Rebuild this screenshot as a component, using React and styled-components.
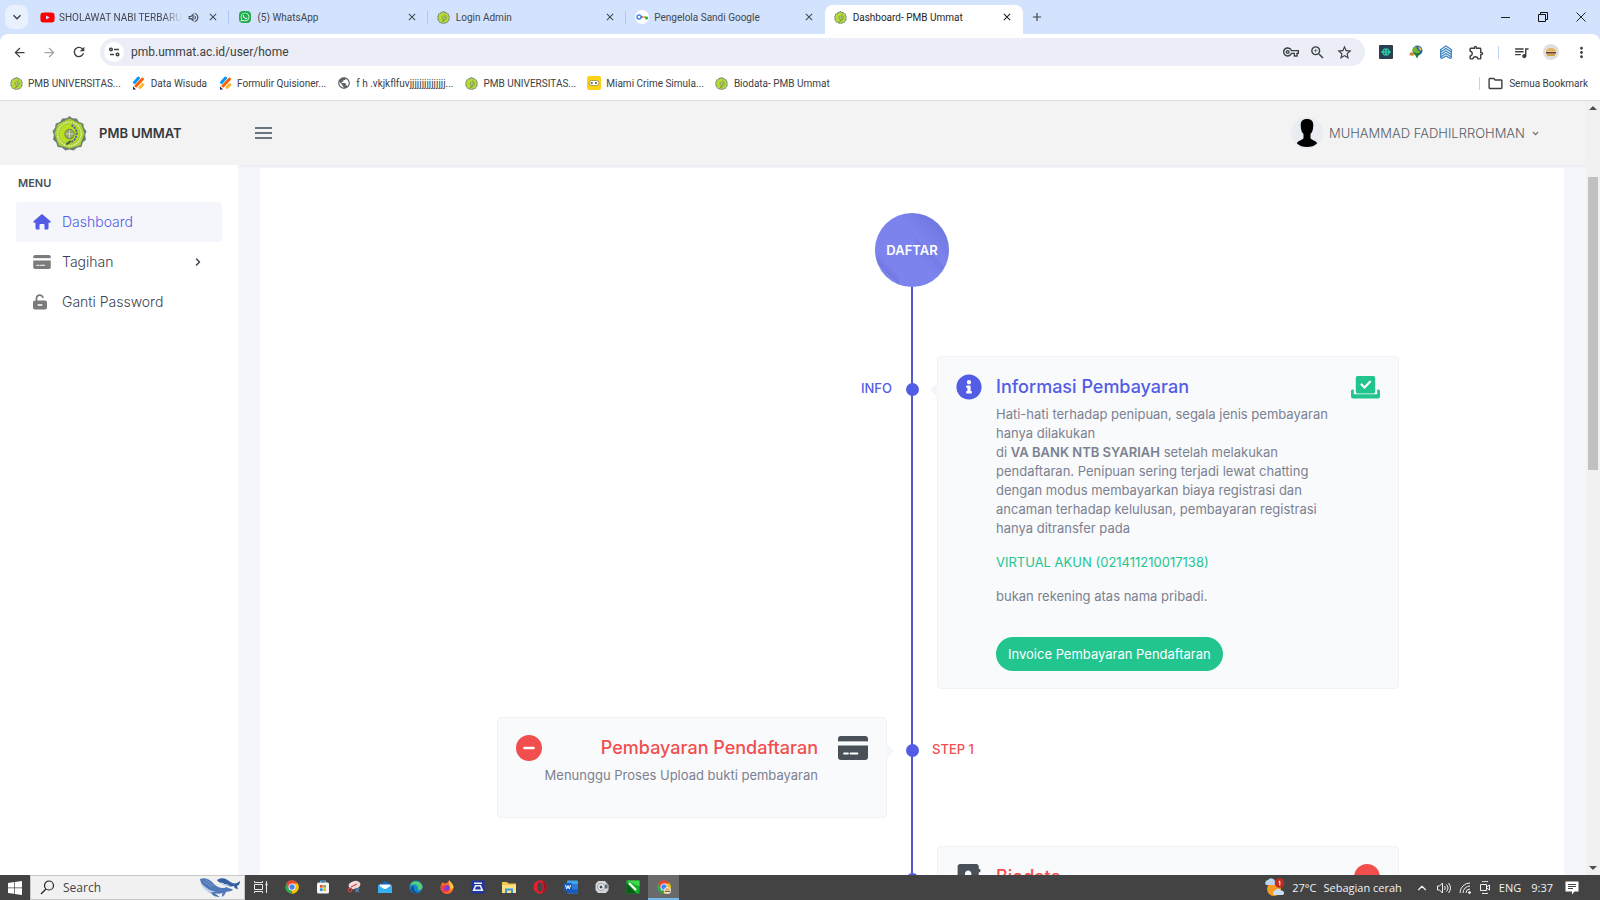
import React from "react";
import styled, { createGlobalStyle } from "styled-components";
import {
  MdArrowBack,
  MdArrowForward,
  MdRefresh,
  MdClose,
  MdAdd,
  MdKeyboardArrowDown,
  MdOutlineVolumeUp,
  MdOutlineVpnKey,
  MdZoomIn,
  MdStarBorder,
  MdOutlineExtension,
  MdQueueMusic,
  MdMoreVert,
  MdOutlineFolder,
  MdPublic,
} from "react-icons/md";
import { FaInfoCircle, FaAddressBook, FaYoutube, FaWhatsapp } from "react-icons/fa";
import { ChevronDown, ChevronRight, ChevronUp } from "lucide-react";

const tabs = [
  { title: "SHOLAWAT NABI TERBARU", icon: "youtube", audio: true },
  { title: "(5) WhatsApp", icon: "whatsapp" },
  { title: "Login Admin", icon: "seal" },
  { title: "Pengelola Sandi Google", icon: "password" },
  { title: "Dashboard- PMB Ummat", icon: "seal", active: true },
];

const bookmarks = [
  { title: "PMB UNIVERSITAS...", icon: "seal" },
  { title: "Data Wisuda", icon: "form" },
  { title: "Formulir Quisioner...", icon: "form" },
  { title: "f h .vkjkflfuvjjjjjjjjjjjjjjj...", icon: "globe" },
  { title: "PMB UNIVERSITAS...", icon: "seal" },
  { title: "Miami Crime Simula...", icon: "game" },
  { title: "Biodata- PMB Ummat", icon: "seal" },
];

// university seal, used as site logo and favicon
const Seal = ({ size }) => (
  <svg width={size} height={size} viewBox="0 0 34 34" aria-hidden="true">
    <path
      d="M17 0l2.500 2.200L24 2.500l2 3.200 4.500 1.800.500 3.800 2.500 3.500-1.300 3.700.800 4.500-3 2.500-1.500 4.500-4 .500L21 33.500l-4-1-4 1L9.500 30.500l-4-.500L4 25.500 1 23l.800-4.500L.500 14.800 3 11.300l.500-3.800L8 5.700l2-3.200 4.500-.300z"
      fill="#6c7f72"
    />
    <path d="M17 2.500l11.500 5.500 3 9-4 11.500-10.500 3-10.500-3-4-11.500 3-9z" fill="#a9cf38" />
    <circle cx="17" cy="17.500" r="11.500" fill="none" stroke="#dff09b" strokeWidth="1.500" strokeDasharray="1.500 1" />
    <circle cx="17" cy="17.500" r="9.500" fill="#b9e01f" />
    <path d="M19 9a9 9 0 0 1-5 17" fill="none" stroke="#53678f" strokeWidth="2" strokeDasharray="2 1" />
    <circle cx="17" cy="17.500" r="4.500" fill="#9aa77b" stroke="#6f8355" />
    <path d="M13 17.500h8M17 13.500v8" stroke="#d9e2a5" strokeWidth="0.800" />
    <path d="M14 28l4-4" stroke="#3c5a2a" strokeWidth="1.500" />
  </svg>
);

const ChromeLogo = ({ badge }) => (
  <svg width="14" height="14" viewBox="0 0 24 24" aria-hidden="true">
    <circle cx="12" cy="12" r="11.500" fill="#34a853" />
    <path d="M12 12L2 6.200A11.500 11.500 0 0 1 22 6.200z" fill="#ea4335" />
    <path d="M12 12V6.200h10A11.500 11.500 0 0 1 12 23.500z" fill="#fbbc04" />
    <path d="M2 6.200L7 15l5-3V6.200z" fill="#ea4335" />
    <circle cx="12" cy="12" r="6" fill="#fff" />
    <circle cx="12" cy="12" r="4.600" fill="#4285f4" />
    {badge && (
      <>
        <circle cx="18" cy="18" r="6" fill="#ece3d6" />
        <path d="M13.500 18.500h9v2h-9z" fill="#8a5a2b" />
        <path d="M14 17.500a4 3.500 0 0 1 8 0z" fill="#e0a857" />
      </>
    )}
  </svg>
);

const CreditCard = ({ width, height }) => (
  <svg width={width} height={height} viewBox="0 0 30 24" fill="currentColor" aria-hidden="true">
    <path d="M3 0h24a3 3 0 0 1 3 3v2H0V3a3 3 0 0 1 3-3z" />
    <path opacity="0.350" d="M0 5h30v1H0z" />
    <path d="M0 9.500h30V21a3 3 0 0 1-3 3H3a3 3 0 0 1-3-3z" />
    <path d="M6 17.500h4M12.500 17.500h7" stroke="#fff" strokeWidth="1.800" strokeLinecap="round" />
  </svg>
);

const MinusCircle = () => (
  <svg width="26" height="26" viewBox="0 0 26 26" aria-hidden="true">
    <circle cx="13" cy="13" r="13" fill="currentColor" />
    <path d="M8.500 13h9" stroke="#fff" strokeWidth="2.600" strokeLinecap="round" />
  </svg>
);

const CheckTray = () => (
  <svg width="29" height="23" viewBox="0 0 29 23" aria-hidden="true">
    <path
      d="M1.500 13.500h1.300v4.800h23.400v-4.800h1.300a1.500 1.500 0 0 1 1.500 1.500v5.500a2 2 0 0 1-2 2H2a2 2 0 0 1-2-2V15a1.500 1.500 0 0 1 1.500-1.500z"
      fill="currentColor"
    />
    <rect x="4.800" width="19.400" height="17.500" rx="1.800" fill="currentColor" />
    <path d="M10.500 8.500l3 3 5.500-5.800" fill="none" stroke="#fff" strokeWidth="2.200" strokeLinecap="round" />
  </svg>
);

const Favicon = ({ name }) => {
  switch (name) {
    case "youtube":
      return (
        <YoutubeMark>
          <FaYoutube size={15} />
        </YoutubeMark>
      );
    case "whatsapp":
      return (
        <WhatsappMark>
          <FaWhatsapp size={10} />
        </WhatsappMark>
      );
    case "password":
      return (
        <svg width="14" height="14" viewBox="0 0 14 14" aria-hidden="true">
          <circle cx="7" cy="7" r="7" fill="#fff" />
          <circle cx="4" cy="7" r="2" fill="none" stroke="#4285f4" strokeWidth="1.500" />
          <path d="M6 7h2" stroke="#ea4335" strokeWidth="1.600" />
          <path d="M8 7h2" stroke="#fbbc04" strokeWidth="1.600" />
          <path d="M9.500 7h3v2h-2" fill="#34a853" stroke="#34a853" strokeWidth="1" />
        </svg>
      );
    case "form":
      return (
        <svg width="13" height="14" viewBox="0 0 13 14" aria-hidden="true">
          <g strokeLinecap="round" strokeWidth="3">
            <path d="M2.500 6.500l4-4.500" stroke="#0099ff" />
            <path d="M4 10l6.500-7" stroke="#ff6100" />
            <path d="M8 11.500l2.800-3" stroke="#ffb629" />
          </g>
          <path d="M1 10.500v3h3z" fill="#0a1551" />
        </svg>
      );
    case "globe":
      return <MdPublic size={14} color="#5f6368" />;
    case "game":
      return (
        <svg width="14" height="14" viewBox="0 0 14 14" aria-hidden="true">
          <rect width="14" height="14" rx="2" fill="#fcd116" />
          <rect x="2" y="4.500" width="10" height="5" rx="2.500" fill="#fff" stroke="#8d7d2a" strokeWidth="0.700" />
          <path d="M3.500 7h2.500M4.750 5.800v2.400" stroke="#555" strokeWidth="0.900" />
          <circle cx="9" cy="7" r="1" fill="#555" />
        </svg>
      );
    default:
      return <Seal size={13} />;
  }
};

// top part of the browser: tabs, address bar and bookmarks
const BrowserChrome = () => (
  <ChromeFrame>
    <TabStrip>
      <TabSearch type="button" aria-label="Cari tab">
        <MdKeyboardArrowDown size={16} />
      </TabSearch>
      <TabList>
        {tabs.map((tab) => (
          <Tab key={tab.title} $active={tab.active}>
            <TabButton type="button">
              <IconSlot>
                <Favicon name={tab.icon} />
              </IconSlot>
              <TabTitle $fade={tab.audio}>{tab.title}</TabTitle>
              {tab.audio && <MdOutlineVolumeUp size={13} />}
            </TabButton>
            <TabClose type="button" aria-label="Tutup">
              <MdClose size={12} />
            </TabClose>
          </Tab>
        ))}
      </TabList>
      <NewTab type="button" aria-label="Tab baru">
        <MdAdd size={14} />
      </NewTab>
      <WindowControls>
        <WindowButton type="button" aria-label="Minimize">
          <svg width="10" height="10" viewBox="0 0 10 10">
            <path d="M1 5.500h9" stroke="#222" />
          </svg>
        </WindowButton>
        <WindowButton type="button" aria-label="Restore">
          <svg width="10" height="10" viewBox="0 0 10 10">
            <path d="M.500 2.500h7v7h-7zM2.500 2.500v-2h7v7h-2" fill="none" stroke="#111" />
          </svg>
        </WindowButton>
        <WindowButton type="button" aria-label="Close">
          <svg width="10" height="10" viewBox="0 0 10 10">
            <path d="M.500.500l9 9M9.500.500l-9 9" stroke="#222" />
          </svg>
        </WindowButton>
      </WindowControls>
    </TabStrip>

    <Toolbar>
      <ToolButton type="button" aria-label="Kembali">
        <MdArrowBack size={15} />
      </ToolButton>
      <ToolButton type="button" aria-label="Maju" disabled>
        <MdArrowForward size={15} />
      </ToolButton>
      <ToolButton type="button" aria-label="Muat ulang">
        <MdRefresh size={16} />
      </ToolButton>
      <Omnibox>
        <SiteInfo type="button" aria-label="Info situs">
          <svg width="11" height="10" viewBox="0 0 11 10" fill="none" stroke="#3c4043" strokeWidth="1.500">
            <circle cx="2" cy="2.500" r="1.300" />
            <path d="M5 2.500h5M1 7.500h4" />
            <circle cx="8.500" cy="7.500" r="1.300" />
          </svg>
        </SiteInfo>
        <AddressInput aria-label="Alamat" defaultValue="pmb.ummat.ac.id/user/home" />
        <OmniButton type="button" aria-label="Sandi">
          <MdOutlineVpnKey size={16} />
        </OmniButton>
        <OmniButton type="button" aria-label="Zoom">
          <MdZoomIn size={17} />
        </OmniButton>
        <OmniButton type="button" aria-label="Bookmark">
          <MdStarBorder size={17} />
        </OmniButton>
      </Omnibox>
      <Extensions>
        <ToolButton type="button" aria-label="Ekstensi 1">
          <svg width="14" height="14" viewBox="0 0 14 14">
            <rect width="14" height="14" rx="1" fill="#2a3f4f" />
            <path d="M5 3.500h4l3 3.500-3 3.500H5L2 7z" fill="#2ed3b0" />
            <path d="M3 5.700h8M3 8.300h8M5.500 4v6M8.500 4v6" stroke="#2a3f4f" strokeWidth="0.400" />
          </svg>
        </ToolButton>
        <ToolButton type="button" aria-label="Ekstensi 2">
          <svg width="14" height="14" viewBox="0 0 14 14">
            <circle cx="8.500" cy="5.500" r="5" fill="#2b63b8" />
            <path d="M4 3l3-2 1 3 3 3-2 2-6-3z" fill="#74b72b" />
            <path d="M9 1l4 3-2 2z" fill="#f0c330" />
            <ellipse cx="3" cy="9" rx="2.700" ry="1.800" fill="#d8842b" />
            <path d="M5 8h6l-3 5.500z" fill="#1d7d2c" />
          </svg>
        </ToolButton>
        <ToolButton type="button" aria-label="Ekstensi 3">
          <svg width="12" height="14" viewBox="0 0 12 14" fill="none" stroke="#3f86c4" strokeWidth="1.300">
            <path d="M.700 4.500L6 1l5.300 3.500M.700 7L6 3.500 11.300 7M.700 9.500L6 6l5.300 3.500M.700 12L6 8.500l5.300 3.500M.700 14L6 11l5.300 3M.700 4v9M11.300 4v9" />
          </svg>
        </ToolButton>
        <ToolButton type="button" aria-label="Ekstensi">
          <MdOutlineExtension size={17} />
        </ToolButton>
        <Divider />
        <ToolButton type="button" aria-label="Media">
          <MdQueueMusic size={17} />
        </ToolButton>
        <ToolButton type="button" aria-label="Profil">
          <svg width="16" height="16" viewBox="0 0 16 16">
            <circle cx="8" cy="8" r="8" fill="#e2dfdb" />
            <path d="M3 7.500a5 3.500 0 0 1 10 0z" fill="#e5b45f" />
            <path d="M3 8h10v1.500H3z" fill="#5f3a1c" />
            <path d="M3.500 10h9l-1 2h-7z" fill="#d69b48" />
          </svg>
        </ToolButton>
        <ToolButton type="button" aria-label="Menu">
          <MdMoreVert size={17} />
        </ToolButton>
      </Extensions>
    </Toolbar>

    <BookmarkBar>
      {bookmarks.map((item, i) => (
        <Bookmark href="#" key={i}>
          <IconSlot>
            <Favicon name={item.icon} />
          </IconSlot>
          {item.title}
        </Bookmark>
      ))}
      <AllBookmarks>
        <Divider />
        <Bookmark href="#">
          <MdOutlineFolder size={17} />
          Semua Bookmark
        </Bookmark>
      </AllBookmarks>
    </BookmarkBar>
  </ChromeFrame>
);

// site header with logo and the signed in user
const Header = () => (
  <HeaderBar>
    <Brand href="#">
      <Seal size={35} />
      PMB UMMAT
    </Brand>
    <Hamburger type="button" aria-label="Menu">
      <svg width="17" height="12" viewBox="0 0 17 12">
        <path d="M0 1h17M0 6h17M0 11h17" stroke="#6b757d" strokeWidth="1.800" />
      </svg>
    </Hamburger>
    <UserButton type="button">
      <svg width="32" height="32" viewBox="0 0 32 32" aria-hidden="true">
        <circle cx="16" cy="16" r="16" fill="#e9edf2" />
        <path
          d="M16 2c4.500 0 6.500 2.500 6.300 6.500-.1 4.500-1.300 7-2.800 8.500v4c0 2 6.500 2.500 6.500 5.500-2.500 2.500-6 3.500-10 3.500S8.500 29 6 26.500c0-3 6.500-3.500 6.500-5.500v-4C11 15.500 9.800 13 9.700 8.500 9.500 4.500 11.500 2 16 2z"
          fill="#000"
        />
      </svg>
      <span>MUHAMMAD FADHILRROHMAN</span>
      <ChevronDown size={9} strokeWidth={3} />
    </UserButton>
  </HeaderBar>
);

const Sidebar = () => (
  <SideNav>
    <MenuLabel>MENU</MenuLabel>
    <NavLink href="#" $active>
      <NavIcon>
        <svg width="18" height="16" viewBox="0 0 18 16" fill="currentColor" aria-hidden="true">
          <path d="M8.300.500a1 1 0 0 1 1.400 0l7.500 6.500c.9.800.4 1.700-.5 1.700H15.500V14a1.500 1.500 0 0 1-1.500 1.500h-2.500V11a1 1 0 0 0-1-1h-3a1 1 0 0 0-1 1v4.500H4A1.500 1.500 0 0 1 2.500 14V8.700H1.300C.4 8.700-.1 7.800.8 7z" />
        </svg>
      </NavIcon>
      Dashboard
    </NavLink>
    <NavLink href="#">
      <NavIcon>
        <CreditCard width={18} height={14} />
      </NavIcon>
      Tagihan
      <ChevronRight size={12} strokeWidth={3} />
    </NavLink>
    <NavLink href="#">
      <NavIcon>
        <svg width="14" height="16" viewBox="0 0 14 16" aria-hidden="true">
          <path d="M3.500 8V4.500a3.300 3.300 0 0 1 6.400-1.200" fill="none" stroke="currentColor" strokeWidth="1.700" strokeLinecap="round" />
          <rect y="6.500" width="14" height="9" rx="2" fill="currentColor" />
          <path d="M5.200 11h3.600" stroke="#fff" strokeWidth="1.600" strokeLinecap="round" />
        </svg>
      </NavIcon>
      Ganti Password
    </NavLink>
  </SideNav>
);

const Timeline = () => (
  <TimelineCard>
    <StartCircle>DAFTAR</StartCircle>
    <Lead />

    <Step>
      <StepLabel $align="right" $tone="primary">INFO</StepLabel>
      <Axis>
        <Dot />
      </Axis>
      <StepCard $side="right">
        <StepIcon $tone="primary">
          <FaInfoCircle size={26} />
        </StepIcon>
        <StepBody>
          <StepTitle $tone="primary">Informasi Pembayaran</StepTitle>
          <Text>
            Hati-hati terhadap penipuan, segala jenis pembayaran hanya dilakukan
            <br />
            di <b>VA BANK NTB SYARIAH</b> setelah melakukan pendaftaran.
            Penipuan sering terjadi lewat chatting dengan modus membayarkan
            biaya registrasi dan ancaman terhadap kelulusan, pembayaran
            registrasi hanya ditransfer pada
          </Text>
          <Text $tone="success">VIRTUAL AKUN (021411210017138)</Text>
          <Text>bukan rekening atas nama pribadi.</Text>
          <InvoiceButton type="button">Invoice Pembayaran Pendaftaran</InvoiceButton>
        </StepBody>
        <StepIcon $tone="success">
          <CheckTray />
        </StepIcon>
      </StepCard>
    </Step>

    <Step>
      <StepCard $side="left">
        <StepIcon $tone="danger">
          <MinusCircle />
        </StepIcon>
        <StepBody $align="right">
          <StepTitle $tone="danger">Pembayaran Pendaftaran</StepTitle>
          <Text>Menunggu Proses Upload bukti pembayaran</Text>
        </StepBody>
        <StepIcon $tone="dark">
          <CreditCard width={30} height={24} />
        </StepIcon>
      </StepCard>
      <Axis>
        <Dot />
      </Axis>
      <StepLabel $tone="danger">STEP 1</StepLabel>
    </Step>

    <Step>
      <StepLabel $align="right" />
      <Axis>
        <Dot />
      </Axis>
      <StepCard $side="right">
        <StepIcon $tone="dark">
          <FaAddressBook size={26} />
        </StepIcon>
        <StepBody>
          <StepTitle $tone="danger">Biodata</StepTitle>
        </StepBody>
        <StepIcon $tone="danger">
          <MinusCircle />
        </StepIcon>
      </StepCard>
    </Step>
  </TimelineCard>
);

const taskIcons = [
  {
    name: "Task View",
    art: (
      <g fill="none" stroke="#e8e8e8">
        <path d="M.500 1v1.500h8V1M.500 13v-1.500h8V13M.500 4.500h8v5h-8zM12.500 1v12" />
        <path d="M11.500 4.500h2" strokeWidth="2" />
      </g>
    ),
  },
  { name: "Chrome", logo: <ChromeLogo /> },
  {
    name: "Store",
    art: (
      <>
        <path d="M4.500 3V1h5v2" fill="none" stroke="#57b5e8" />
        <rect x="1" y="2.500" width="12" height="11" rx="1.500" fill="#f4f4f4" />
        <path d="M4 5h2.700v2.700H4z" fill="#e8502a" />
        <path d="M7.300 5H10v2.700H7.300z" fill="#76b82a" />
        <path d="M4 8.300h2.700V11H4z" fill="#1e9de3" />
        <path d="M7.300 8.300H10V11H7.300z" fill="#f6b70f" />
      </>
    ),
  },
  {
    name: "Snip",
    art: (
      <>
        <ellipse cx="7.500" cy="5" rx="6" ry="4" fill="#f1dcdc" transform="rotate(-15 7.500 5)" />
        <path d="M4 7L10 4" stroke="#d44848" strokeWidth="1.200" />
        <circle cx="3" cy="10" r="1.800" fill="none" stroke="#c94545" strokeWidth="1.300" />
        <path d="M8 8l4 4M12 8l-3.500 4" stroke="#5381a8" strokeWidth="1.500" />
      </>
    ),
  },
  {
    name: "Mail",
    art: (
      <>
        <path d="M0 5l7-4 7 4v8H0z" fill="#1466b8" />
        <path d="M1.500 4.500h11V9h-11z" fill="#fff" />
        <path d="M0 5l7 4.500L14 5v8H0z" fill="#35b1f1" />
      </>
    ),
  },
  {
    name: "Edge",
    art: (
      <>
        <circle cx="7" cy="7" r="6.500" fill="#1b86d0" />
        <path d="M1 5.500A6.500 6.500 0 0 1 13.500 7c0 2-1.500 3-3.500 3-1 0-1.500-.7-1-1.500C9.500 6 6 3 1 5.500z" fill="#51cf7a" />
        <path d="M5 7c-1 3 1.500 5.500 5 5-5 3-8.500-1-8-4 .3-1.500 2-2.500 3-1z" fill="#0d5297" />
      </>
    ),
  },
  {
    name: "Firefox",
    art: (
      <>
        <path d="M9 0c1 2 4.500 3.500 4.500 7.500A6.500 6.500 0 0 1 .500 7.500C.500 5 2 4 2.300 2l2 1.500C6 3 8.500 3 9 0z" fill="#ff6a26" />
        <path d="M9 0c1 2 4.500 3.500 4.500 7.500l-3 3C11 6 8 5 9 0z" fill="#ffc93c" />
        <circle cx="6.800" cy="8" r="3" fill="#7d3fd1" />
        <path d="M1 6c2-1 4-.5 5 .5L3.500 9C5 11 8 11 10 9c-1 3-5 4.500-8 2z" fill="#f5364c" />
      </>
    ),
  },
  {
    name: "Scanner",
    art: (
      <>
        <rect x="0.500" y="0.500" width="13" height="13" fill="#2036a0" />
        <path d="M3 2.500h8v1.500H3zM4 5h6L12.500 11h-11z" fill="#f2f4fb" />
        <path d="M5 6.500h4l1 3H4z" fill="#2036a0" />
      </>
    ),
  },
  {
    name: "Explorer",
    art: (
      <>
        <path d="M0 2h5l1.500 1.500H14V13H0z" fill="#f4c64e" />
        <path d="M0 5h14v8H0z" fill="#ffdf84" />
        <path d="M3 8.500h8V13H9v-2.500H5V13H3z" fill="#3a9ad9" />
      </>
    ),
  },
  {
    name: "Opera",
    art: (
      <>
        <circle cx="7" cy="7" r="6.700" fill="#e3202c" />
        <ellipse cx="7" cy="7" rx="2.700" ry="4.700" fill="#464545" />
        <path d="M9 .700a6.700 6.700 0 0 1 0 12.600c2-2 2.500-9 0-12.600z" fill="#a70f1c" />
      </>
    ),
  },
  {
    name: "Word",
    art: (
      <>
        <rect x="3" y="0.500" width="11" height="13" rx="1" fill="#41a5ee" />
        <path d="M3 4h11v6H3z" fill="#2b7cd3" />
        <path d="M3 9.500h11v4H3z" fill="#185abd" />
        <rect x="0" y="3" width="8" height="8" rx="1" fill="#185abd" />
        <path d="M1.500 5l1.200 4L4 5.500 5.300 9l1.200-4" fill="none" stroke="#fff" strokeWidth="1" />
      </>
    ),
  },
  {
    name: "Camera",
    art: (
      <>
        <path d="M3 1h7l3.500 4v5L11 13H3L.500 10V4z" fill="#d3d6d8" />
        <circle cx="6" cy="7" r="3.500" fill="#f4f5f6" stroke="#868d93" strokeWidth="0.800" />
        <circle cx="6" cy="7" r="1.500" fill="#3f4a55" />
        <path d="M10 4.500h2.500v4H10z" fill="#5d6b78" />
      </>
    ),
  },
  {
    name: "Corel",
    art: (
      <>
        <rect x="0.500" y="0.500" width="13" height="13" fill="#12b32b" />
        <path d="M.500.500h13v6z" fill="#3ddb4d" />
        <path d="M.500 3l10 10.500H.500z" fill="#0a5c18" />
        <path d="M3 3l7 7" stroke="#fff" strokeWidth="2.200" />
      </>
    ),
  },
  { name: "Chrome profile", logo: <ChromeLogo badge />, active: true },
];

const Whales = () => (
  <svg width="40" height="20" viewBox="0 0 40 20" aria-hidden="true">
    <path d="M0 1c5-2 10 0 14 5 4 4 9 5 13 3 1 2 5 1 6 3-3 2-5 1-7 2-1 2-2 4-4 5 0-2 0-3 1-4-3 1-6 1-8 0 1 1 3 3 5 4-4 0-7-1-9-4C5 13 1 7 0 1z" fill="#4f78b8" />
    <path d="M1 5c4 4 8 8 15 8.500l-5 1C5 13 2 10 1 5z" fill="#c6d6ec" />
    <path d="M3 3l9 6M6 2l8 6" stroke="#86a7d6" strokeWidth="0.700" />
    <path d="M17 2c4-3 9-2 12 1 3 2 5 3 8 2l3-2c0 3-1 4-3 5l1 3c-3 0-4-2-4-3-4 1-8 0-11-3-3 0-5-1-6-3z" fill="#35609f" />
    <path d="M18 4c3 2 6 2 9 2l3 2c-4 0-9-1-12-4z" fill="#b7cbe6" />
  </svg>
);

const Taskbar = () => (
  <TaskRow>
    <StartButton type="button" aria-label="Start">
      <svg width="14" height="14" viewBox="0 0 14 14" fill="#fff">
        <path d="M0 2l6-.9v5.500H0zM6.700 1L14 0v6.600H6.700zM0 7.300h6v5.500L0 12zM6.700 7.300H14V14l-7.300-1z" />
      </svg>
    </StartButton>
    <SearchBox>
      <svg width="15" height="15" viewBox="0 0 15 15" fill="none" stroke="#222" strokeWidth="1.200" aria-hidden="true">
        <circle cx="9" cy="5.500" r="4.500" />
        <path d="M6 9l-5 5" />
      </svg>
      <SearchInput placeholder="Search" aria-label="Search" />
      <Whales />
    </SearchBox>
    {taskIcons.map((item) => (
      <TaskButton type="button" key={item.name} aria-label={item.name} $active={item.active}>
        {item.logo || (
          <svg width="14" height="14" viewBox="0 0 14 14">
            {item.art}
          </svg>
        )}
      </TaskButton>
    ))}
    <Tray>
      <Weather type="button">
        <svg width="20" height="19" viewBox="0 0 20 19" aria-hidden="true">
          <circle cx="9" cy="11" r="7" fill="#f59b23" />
          <path d="M1 7a3 3 0 0 1 2-5 4 4 0 0 1 7 1v4z" fill="#bcd3f2" />
          <path d="M9 17a2.500 2.500 0 0 1 1-4.500 3.500 3.500 0 0 1 6 0A2.500 2.500 0 0 1 18 17z" fill="#c9dcf6" />
          <circle cx="14.500" cy="5" r="4.800" fill="#c42b1c" />
          <path d="M13.500 4l1.300-1v4.500" fill="none" stroke="#fff" />
        </svg>
        <span>27°C</span>
        <span>Sebagian cerah</span>
      </Weather>
      <ChevronUp size={14} />
      <svg width="14" height="12" viewBox="0 0 14 12" fill="none" stroke="currentColor" aria-hidden="true">
        <path d="M.500 4h2l3-3v10l-3-3h-2zM7.500 4a3 3 0 0 1 0 4M9.500 2.500a5 5 0 0 1 0 7M11.500 1a8 8 0 0 1 0 10" />
      </svg>
      <svg width="12" height="12" viewBox="0 0 12 12" fill="none" stroke="currentColor" aria-hidden="true">
        <path d="M1 11A10 10 0 0 1 11 1M4 11a7 7 0 0 1 7-7M7 11a4 4 0 0 1 4-4" />
        <circle cx="10.500" cy="10.500" r="1" fill="currentColor" />
      </svg>
      <svg width="12" height="13" viewBox="0 0 12 13" fill="none" stroke="currentColor" aria-hidden="true">
        <path d="M3 .700c2-.5 4-.5 6 0M3 12.300c2 .5 4 .5 6 0M1.500 3.500h6v6h-6zM7.500 6l3-2v5l-3-2" />
      </svg>
      <span>ENG</span>
      <Clock>9:37</Clock>
      <svg width="14" height="14" viewBox="0 0 14 14" aria-hidden="true">
        <path d="M.500.500h13v10h-4L7 13.500V10.500H.500z" fill="#fff" />
        <path d="M3 3.500h8M3 5.500h8M3 7.500h5" stroke="#444" />
      </svg>
    </Tray>
  </TaskRow>
);

const App = () => (
  <Screen>
    <GlobalStyle />
    <BrowserChrome />
    <Viewport>
      <Page>
        <Header />
        <Body>
          <Sidebar />
          <Main>
            <Timeline />
          </Main>
        </Body>
      </Page>
      <ScrollTrack>
        <ScrollArrow $dir="up" />
        <ScrollThumb />
        <ScrollArrow $dir="down" />
      </ScrollTrack>
    </Viewport>
    <Taskbar />
  </Screen>
);

const tones = {
  primary: "#525ce5",
  danger: "#f14e4e",
  success: "#23c58f",
  dark: "#495057",
};

const GlobalStyle = createGlobalStyle`
  * {
    box-sizing: border-box;
  }

  body {
    margin: 0;
    font-family: Inter, "Liberation Sans", sans-serif;
    font-size: 13px;
  }

  button, input {
    font: inherit;
    color: inherit;
    border: 0;
    padding: 0;
    margin: 0;
    background: none;
  }

  a {
    color: inherit;
    text-decoration: none;
  }

  svg {
    flex-shrink: 0;
  }
`;

const Screen = styled.div`
  height: 100vh;
  display: flex;
  flex-direction: column;
  overflow: hidden;
`;

/* browser */
const ChromeFrame = styled.header`
  flex-shrink: 0;
  background: #d3e2fd;
  color: #3c4043;
  font-family: Roboto, "Open Sans", sans-serif;
  font-size: 10px;
`;

const TabStrip = styled.div`
  height: 34px;
  display: flex;
  align-items: center;
`;

const TabSearch = styled.button`
  width: 23px;
  height: 24px;
  margin: 0 3px 0 5px;
  display: grid;
  place-items: center;
  border-radius: 8px;
  background: #e9f0fe;
`;

const TabList = styled.div`
  flex: 0 1 992px;
  align-self: stretch;
  padding-top: 5px;
  display: flex;
`;

const Tab = styled.div`
  flex: 1 1 0;
  min-width: 0;
  display: flex;
  align-items: center;
  padding: 0 9px 5px 9px;
  border-radius: 8px 8px 0 0;
  color: ${(p) => (p.$active ? "#1f1f1f" : "#43474e")};
  background: ${(p) =>
    p.$active
      ? "#fff"
      : "linear-gradient(#a8c7fa, #a8c7fa) right 5px / 1px 14px no-repeat"};

  &:nth-last-child(2) {
    background: none;
  }
`;

const TabButton = styled.button`
  flex: 1;
  min-width: 0;
  height: 24px;
  display: flex;
  align-items: center;
  gap: 5px;
  text-align: left;
`;

const TabClose = styled.button`
  width: 14px;
  height: 14px;
  margin-left: 6px;
  display: grid;
  place-items: center;
`;

const TabTitle = styled.span`
  flex: 1;
  overflow: hidden;
  white-space: nowrap;
  mask-image: ${(p) => (p.$fade ? "linear-gradient(90deg, #000 85%, transparent)" : "none")};
`;

const IconSlot = styled.span`
  width: 14px;
  height: 14px;
  flex-shrink: 0;
  display: grid;
  place-items: center;
`;

const YoutubeMark = styled.span`
  display: grid;
  color: #f00;
`;

const WhatsappMark = styled.span`
  width: 12px;
  height: 12px;
  display: grid;
  place-items: center;
  border-radius: 4px;
  background: #1fad4b;
  color: #fff;
`;

const NewTab = styled.button`
  width: 28px;
  height: 24px;
  display: grid;
  place-items: center;
`;

const WindowControls = styled.div`
  margin-left: auto;
  display: flex;
`;

const WindowButton = styled.button`
  width: 38px;
  height: 34px;
  display: grid;
  place-items: center;
`;

const Toolbar = styled.div`
  height: 36px;
  display: flex;
  align-items: center;
  padding: 0 4px;
  background: #fff;
  border-radius: 8px 8px 0 0;
`;

const ToolButton = styled.button`
  width: 30px;
  height: 28px;
  display: grid;
  place-items: center;

  &:disabled {
    color: #9fa3a8;
  }
`;

const Omnibox = styled.div`
  flex: 1;
  height: 28px;
  margin: 0 6px;
  padding: 0 7px 0 4px;
  display: flex;
  align-items: center;
  border-radius: 14px;
  background: #ebeef7;
`;

const SiteInfo = styled.button`
  width: 20px;
  height: 20px;
  display: grid;
  place-items: center;
  border-radius: 50%;
  background: #fff;
`;

const AddressInput = styled.input`
  flex: 1;
  min-width: 0;
  padding-left: 7px;
  font-size: 12px;
  outline: 0;
`;

const OmniButton = styled.button`
  width: 27px;
  height: 24px;
  display: grid;
  place-items: center;
`;

const Extensions = styled.div`
  display: flex;
  align-items: center;
`;

const Divider = styled.span`
  width: 1px;
  height: 13px;
  margin: 0 7px;
  background: #c0d3f7;
`;

const BookmarkBar = styled.nav`
  height: 31px;
  display: flex;
  align-items: center;
  gap: 11px;
  padding: 0 12px 4px 9px;
  background: #fff;
  border-bottom: 1px solid #dadce0;
`;

const Bookmark = styled.a`
  display: flex;
  align-items: center;
  gap: 5px;
  white-space: nowrap;
`;

const AllBookmarks = styled.div`
  margin-left: auto;
  display: flex;
  align-items: center;
`;

/* page */
const Viewport = styled.div`
  flex: 1;
  min-height: 0;
  display: flex;
`;

const Page = styled.div`
  flex: 1;
  min-width: 0;
  display: flex;
  flex-direction: column;
  overflow: hidden;
`;

const HeaderBar = styled.header`
  height: 64px;
  flex-shrink: 0;
  display: flex;
  align-items: center;
  padding: 0 46px 0 52px;
  background: #f3f3f3;
`;

const Brand = styled.a`
  width: 203px;
  display: flex;
  align-items: center;
  gap: 12px;
  color: #343a40;
  font-weight: 600;
`;

const Hamburger = styled.button`
  display: grid;
`;

const UserButton = styled.button`
  margin-left: auto;
  display: flex;
  align-items: center;
  gap: 6px;
  color: #565f66;
  font-weight: 300;
`;

const Body = styled.div`
  flex: 1;
  min-height: 0;
  display: flex;
`;

const SideNav = styled.nav`
  width: 238px;
  flex-shrink: 0;
  padding: 8px 16px;
  background: #fff;
`;

const MenuLabel = styled.h2`
  margin: 0 0 9px 2px;
  color: #495057;
  font-size: 11px;
  line-height: 20px;
  font-weight: 600;
`;

const NavLink = styled.a`
  height: 40px;
  display: flex;
  align-items: center;
  padding: 0 18px 1px 17px;
  border-radius: 3px;
  font-size: 14px;
  font-weight: 300;
  color: ${(p) => (p.$active ? tones.primary : "#3c4252")};
  background: ${(p) => (p.$active ? "#f4f6fb" : "none")};

  > span {
    color: ${(p) => (p.$active ? tones.primary : "#7b7b7b")};
  }

  > svg {
    margin-left: auto;
  }
`;

const NavIcon = styled.span`
  width: 29px;
  display: flex;
`;

const Main = styled.main`
  flex: 1;
  min-width: 0;
  padding: 3px 22px 0;
  display: flex;
  background: linear-gradient(#ebeef5, #f4f6fb 4px);
`;

const TimelineCard = styled.section`
  flex: 1;
  min-width: 0;
  padding-top: 45px;
  overflow: hidden;
  background: #fff;
`;

const StartCircle = styled.div`
  width: 74px;
  height: 74px;
  margin: 0 auto;
  display: grid;
  place-items: center;
  border-radius: 50%;
  color: #fff;
  font-weight: 600;
  background:
    linear-gradient(45deg, transparent 50%, rgba(60, 65, 170, 0.2) 50%, transparent 64%) -10px 38px / 34px 34px no-repeat,
    linear-gradient(225deg, transparent 50%, rgba(60, 65, 170, 0.12) 50%, transparent 72%) 40px 24px / 36px 36px no-repeat,
    linear-gradient(225deg, rgba(60, 65, 170, 0.3), transparent 36%),
    #7c83ec;
`;

const line = "linear-gradient(#5358cc, #5358cc) center / 2px 100% no-repeat";

const Lead = styled.div`
  height: 69px;
  background: ${line};
`;

const Step = styled.article`
  display: grid;
  grid-template-columns: 1fr 40px 1fr;
`;

const Axis = styled.div`
  padding-top: 27px;
  background: ${line};
`;

const Dot = styled.div`
  width: 13px;
  height: 13px;
  margin: 0 auto;
  border-radius: 50%;
  background: ${tones.primary};
`;

const StepLabel = styled.div`
  padding-top: 22px;
  line-height: 20px;
  font-weight: 500;
  text-align: ${(p) => p.$align || "left"};
  color: ${(p) => tones[p.$tone]};
`;

const StepCard = styled.div`
  position: relative;
  width: ${(p) => (p.$side === "right" ? "462px" : "390px")};
  max-width: 100%;
  min-height: 101px;
  margin: ${(p) => (p.$side === "right" ? "0 0 28px 5px" : "0 5px 28px auto")};
  padding: 17px 18px;
  display: flex;
  align-items: flex-start;
  gap: ${(p) => (p.$side === "right" ? "14px" : "0")};
  border: 1px solid #eff2f7;
  border-radius: 4px;
  background: #f9fafc;

  /* pointer towards the line */
  &::before {
    content: "";
    position: absolute;
    top: 25px;
    ${(p) => (p.$side === "right" ? "right" : "left")}: 100%;
    border: 8px solid transparent;
    ${(p) => (p.$side === "right" ? "border-right-color" : "border-left-color")}: #f5f6fa;
  }
`;

const StepIcon = styled.span`
  min-height: 26px;
  display: flex;
  align-items: center;
  color: ${(p) => tones[p.$tone]};
`;

const StepBody = styled.div`
  flex: 1;
  min-width: 0;
  text-align: ${(p) => p.$align || "left"};
  padding-right: ${(p) => (p.$align === "right" ? "20px" : "0")};
`;

const StepTitle = styled.h3`
  margin: 0 0 5px;
  font-size: 18px;
  line-height: 26px;
  font-weight: 500;
  color: ${(p) => tones[p.$tone]};
`;

const Text = styled.p`
  margin: 0 0 15px;
  line-height: 19px;
  color: ${(p) => tones[p.$tone] || "#7b8190"};

  b {
    font-weight: 600;
  }
`;

const InvoiceButton = styled.button`
  height: 34px;
  margin: 16px 0 0;
  padding: 0 12px;
  border-radius: 17px;
  color: #fff;
  background: ${tones.success};
`;

const ScrollTrack = styled.div`
  width: 14px;
  display: flex;
  flex-direction: column;
  align-items: center;
  padding: 1px 0;
  background: #f1f1f1;
`;

const ScrollArrow = styled.span`
  border: 4px solid transparent;
  border-${(p) => (p.$dir === "up" ? "bottom" : "top")}-color: #505050;
  margin-top: ${(p) => (p.$dir === "up" ? "0" : "auto")};
`;

const ScrollThumb = styled.div`
  width: 10px;
  height: 38%;
  margin-top: 67px;
  background: #c1c1c1;
`;

/* windows taskbar */
const TaskRow = styled.footer`
  height: 25px;
  flex-shrink: 0;
  display: flex;
  align-items: center;
  background: #444343;
  color: #f2f2f2;
  font-family: "Open Sans", Roboto, sans-serif;
  font-size: 11px;
`;

const StartButton = styled.button`
  width: 30px;
  height: 25px;
  display: grid;
  place-items: center;
`;

const SearchBox = styled.label`
  width: 215px;
  height: 25px;
  padding: 0 4px 0 9px;
  display: flex;
  align-items: center;
  gap: 8px;
  border: 1px solid #c9c9c9;
  background: #f1f1f1;
`;

const SearchInput = styled.input`
  flex: 1;
  min-width: 0;
  color: #444;
  font-size: 12px;
  outline: 0;

  &::placeholder {
    color: #444;
  }
`;

const TaskButton = styled.button`
  width: 31px;
  height: 25px;
  display: grid;
  place-items: center;
  background: ${(p) => (p.$active ? "#6a6a6a" : "none")};
  border-bottom: 2px solid ${(p) => (p.$active ? "#76b9ed" : "transparent")};
`;

const Tray = styled.div`
  margin-left: auto;
  padding-right: 21px;
  display: flex;
  align-items: center;
  gap: 8px;
`;

const Weather = styled.button`
  display: flex;
  align-items: center;
  gap: 7px;
  margin-right: 5px;
`;

const Clock = styled.span`
  margin: 0 4px 0 2px;
`;

export default App;
